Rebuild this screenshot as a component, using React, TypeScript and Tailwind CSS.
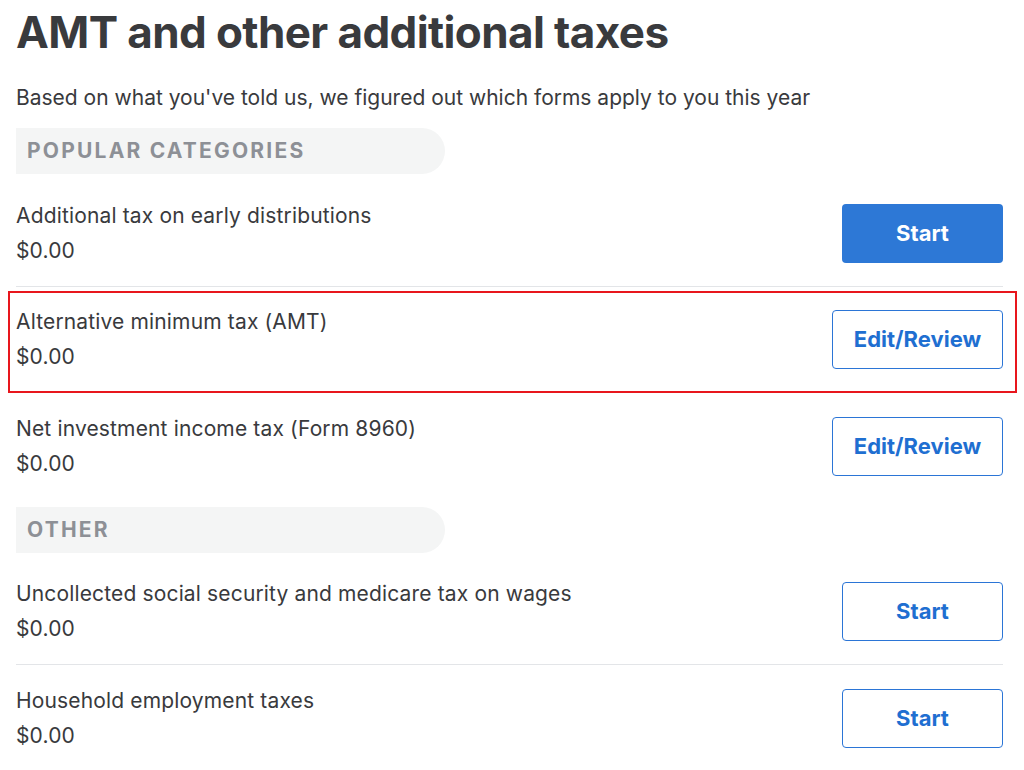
import React from "react";

type Row = {
  title: string;
  amount: string;
  action: "start" | "primary" | "edit";
  divider?: boolean;
  highlight?: boolean;
};

const popular: Row[] = [
  { title: "Additional tax on early distributions", amount: "$0.00", action: "primary", divider: true },
  { title: "Alternative minimum tax (AMT)", amount: "$0.00", action: "edit", divider: true, highlight: true },
  { title: "Net investment income tax (Form 8960)", amount: "$0.00", action: "edit" },
];

const other: Row[] = [
  { title: "Uncollected social security and medicare tax on wages", amount: "$0.00", action: "start", divider: true },
  { title: "Household employment taxes", amount: "$0.00", action: "start" },
];

function CategoryPill({ label }: { label: string }) {
  return (
    <div className="h-[46px] w-[429px] bg-[#f4f5f5] rounded-r-[23px] flex items-center pl-[11px]">
      <span className="text-[21px] font-bold tracking-[2.2px] text-[#8d9096]">{label}</span>
    </div>
  );
}

function ActionButton({ action }: { action: Row["action"] }) {
  if (action === "primary") {
    return (
      <button className="h-[59px] w-[161px] rounded-[4px] bg-[#2d78d6] text-white text-[22px] font-bold">
        Start
      </button>
    );
  }
  return (
    <button
      className={`h-[59px] ${action === "edit" ? "w-[171px]" : "w-[161px]"} rounded-[4px] border border-[#2b75d6] bg-white text-[#1f6fd1] text-[22px] font-bold`}
    >
      {action === "edit" ? "Edit/Review" : "Start"}
    </button>
  );
}

function TaxRow({ row }: { row: Row }) {
  return (
    <div
      className={`relative h-[106px] flex items-center justify-between ${row.divider ? "border-b border-[#e3e5e8]" : ""}`}
    >
      <div className="flex flex-col gap-[11px] text-[21px] leading-[24px] tracking-[0.15px] text-[#393a3d]">
        <span>{row.title}</span>
        <span>{row.amount}</span>
      </div>
      <ActionButton action={row.action} />
      {row.highlight && (
        <div className="absolute left-[-8px] right-[-14px] top-[4px] bottom-[-1px] border-2 border-[#e8161d] pointer-events-none" />
      )}
    </div>
  );
}

export default function App() {
  return (
    <div className="min-h-screen bg-white pl-4 pr-[21px] font-['Inter',sans-serif] text-[#393a3d] overflow-hidden">
      <h1 className="pt-[6px] text-[44px] leading-[52px] font-bold tracking-[-0.6px]">
        AMT and other additional taxes
      </h1>
      <p className="mt-[28px] text-[21px] leading-[24px]">
        Based on what you've told us, we figured out which forms apply to you this year
      </p>
      <div className="mt-[18px]">
        <CategoryPill label="POPULAR CATEGORIES" />
      </div>
      <div className="mt-[7px]">
        {popular.map((row) => (
          <TaxRow key={row.title} row={row} />
        ))}
      </div>
      <div className="mt-2">
        <CategoryPill label="OTHER" />
      </div>
      <div className="mt-[6px]">
        {other.map((row) => (
          <TaxRow key={row.title} row={row} />
        ))}
      </div>
    </div>
  );
}
